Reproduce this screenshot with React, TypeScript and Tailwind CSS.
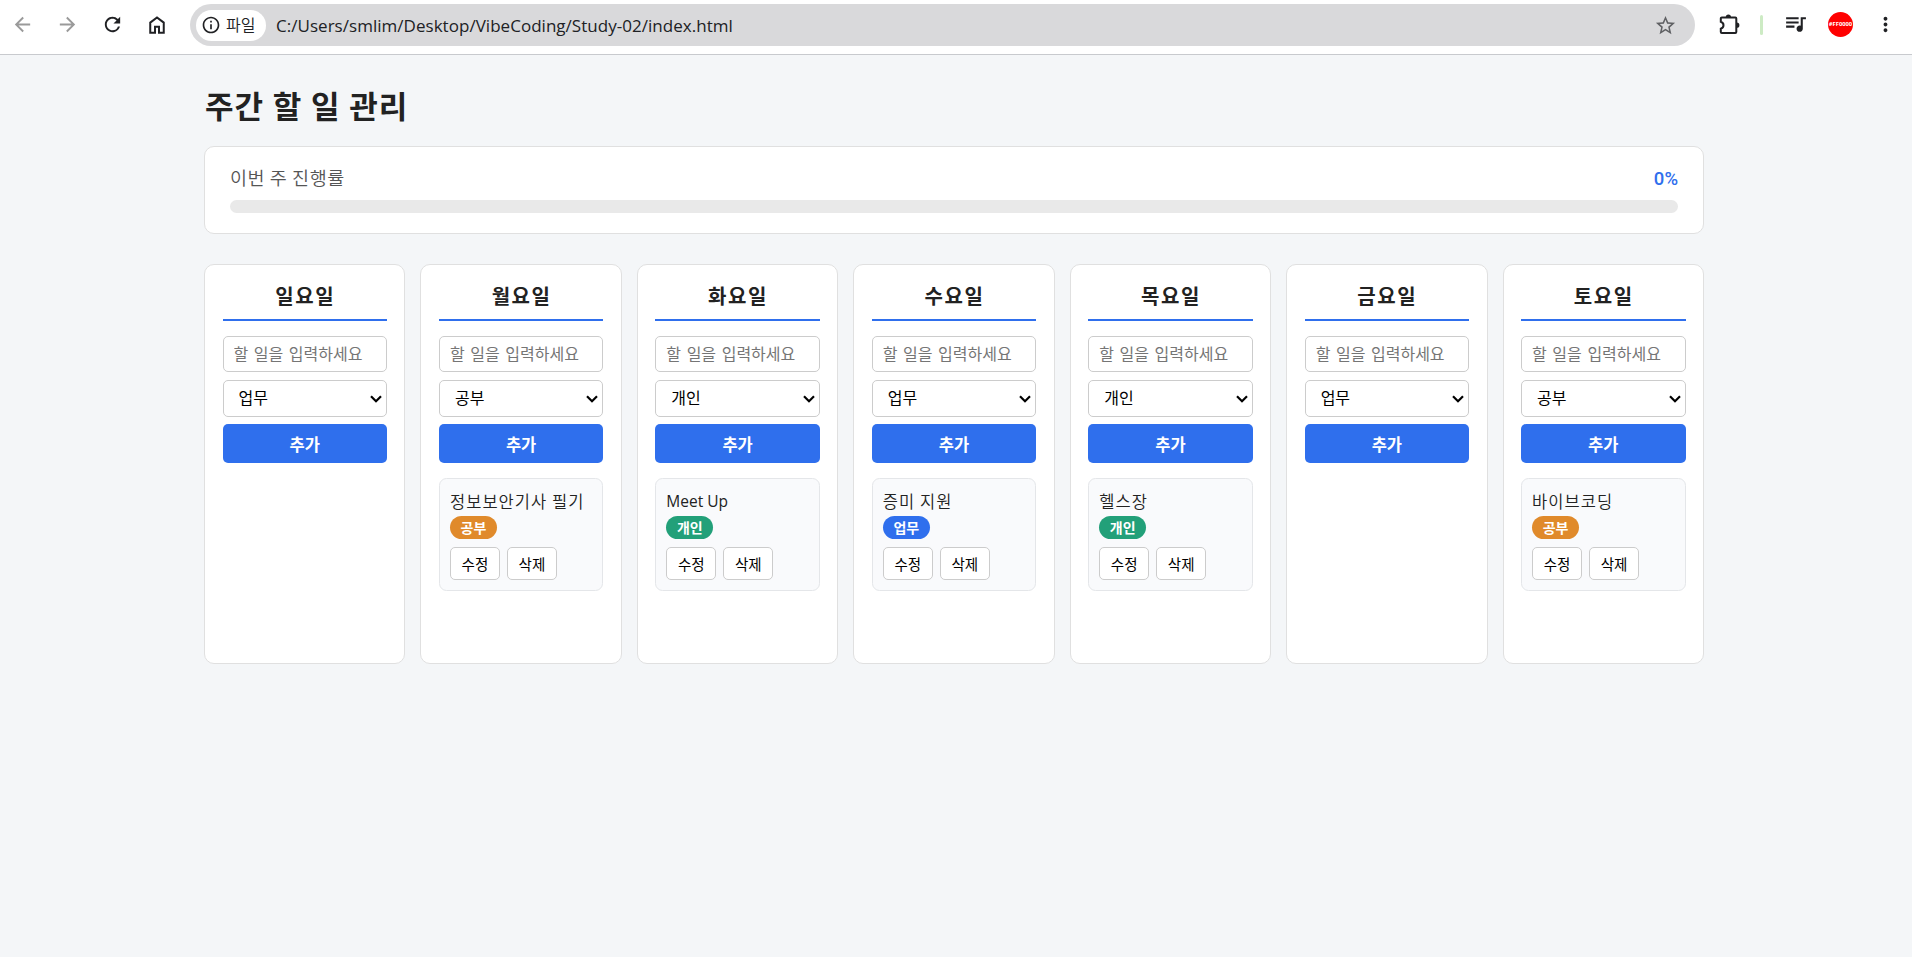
import {
  MdArrowBack,
  MdArrowForward,
  MdInfoOutline,
  MdMoreVert,
  MdQueueMusic,
  MdRefresh,
  MdStarBorder,
} from "react-icons/md";

type Category = "업무" | "공부" | "개인";

type Day = {
  name: string;
  selected: Category;
  task?: { title: string; category: Category };
};

const categories: Category[] = ["업무", "공부", "개인"];

const badgeColors: Record<Category, string> = {
  업무: "bg-[#2f6fed]",
  공부: "bg-[#e08a2b]",
  개인: "bg-[#22a079]",
};

const days: Day[] = [
  { name: "일요일", selected: "업무" },
  {
    name: "월요일",
    selected: "공부",
    task: { title: "정보보안기사 필기", category: "공부" },
  },
  {
    name: "화요일",
    selected: "개인",
    task: { title: "Meet Up", category: "개인" },
  },
  {
    name: "수요일",
    selected: "업무",
    task: { title: "증미 지원", category: "업무" },
  },
  {
    name: "목요일",
    selected: "개인",
    task: { title: "헬스장", category: "개인" },
  },
  { name: "금요일", selected: "업무" },
  {
    name: "토요일",
    selected: "공부",
    task: { title: "바이브코딩", category: "공부" },
  },
];

function HomeIcon() {
  return (
    <svg viewBox="0 0 16 18" className="h-[18px] w-4" fill="none">
      <path
        d="M1.25 6.6 8 1.5l6.75 5.1v10.1H10v-6H6v6H1.25z"
        stroke="#202124"
        strokeWidth="2"
      />
    </svg>
  );
}

function PuzzleIcon() {
  return (
    <svg viewBox="0 0 21 21" className="size-[21px]" fill="none">
      <path
        d="M2.8 3.4H16.3a1 1 0 0 1 1 1V18a1 1 0 0 1-1 1H2.8a1 1 0 0 1-1-1v-3.4c3.6-1.2 3.6-5.6 0-6.8V4.4a1 1 0 0 1 1-1z"
        stroke="#202124"
        strokeWidth="2"
      />
      <path d="M6.8 3a2.6 2.6 0 0 1 5.2 0zM17.8 8.6a2.6 2.6 0 0 1 0 5.2z" fill="#202124" />
    </svg>
  );
}

function BrowserBar() {
  return (
    <header className="flex h-[55px] items-start border-b border-[#c8cace] bg-white pt-1 text-[#202124]">
      <div className="flex h-[41px] w-[190px] items-center pl-[11px]">
        <MdArrowBack className="size-[23px] text-[#9a9a9a]" />
        <MdArrowForward className="ml-[22px] size-[23px] text-[#9a9a9a]" />
        <MdRefresh className="ml-[22px] size-[23px]" />
        <span className="ml-[25px]">
          <HomeIcon />
        </span>
      </div>
      <div className="flex h-[42px] w-[1505px] items-center rounded-full bg-[#d9d9db] pr-[18px] pl-1.5">
        <div className="flex h-[31px] w-[70px] items-center rounded-full bg-white pl-[5px]">
          <MdInfoOutline className="size-5" />
          <span className="ml-[5px] pb-[3px] text-[16px] font-[350]">파일</span>
        </div>
        <span className="ml-[10px] pt-0.5 font-['Open_Sans','Noto_Sans',sans-serif] text-[17px] tracking-[0.03px]">
          C:/Users/smlim/Desktop/VibeCoding/Study-02/index.html
        </span>
        <MdStarBorder className="ml-auto size-[23px] text-[#5f6063]" />
      </div>
      <div className="flex h-[41px] flex-1 items-center pl-6">
        <PuzzleIcon />
        <span className="ml-5 h-5 w-[3px] rounded-full bg-[#cdebc4]" />
        <MdQueueMusic className="mb-0.5 ml-[20px] size-[25px]" />
        <span className="ml-[20px] flex size-[25px] items-center justify-center overflow-hidden rounded-full bg-[#ff0000] font-['Open_Sans',sans-serif] text-[5.8px] font-bold text-white">
          #FF0000
        </span>
        <MdMoreVert className="ml-[21px] size-[23px]" />
      </div>
    </header>
  );
}

function TaskCard({ title, category }: { title: string; category: Category }) {
  // Hangul is set a little larger and looser than Latin text
  const titleFont = /^[\w ]+$/.test(title)
    ? "font-['Open_Sans',sans-serif] text-[15.5px] font-normal"
    : "text-[16.5px] tracking-[1.05px] font-[350]";

  return (
    <li className="h-[113px] rounded-[7.5px] border border-[#e4e6e9] bg-[#f9fafc] p-[10px]">
      <p className={`flex h-[25px] items-center whitespace-nowrap ${titleFont}`}>
        {title}
      </p>
      <span
        className={`mt-0.5 flex h-[23px] w-[47px] items-center justify-center rounded-full text-[14px] font-bold text-white ${badgeColors[category]}`}
      >
        {category}
      </span>
      <div className="mt-2 flex gap-[7px] text-black">
        <button className="h-[33px] w-[50px] rounded-[5px] border border-[#cccccc] bg-white text-[14.5px]">
          수정
        </button>
        <button className="h-[33px] w-[50px] rounded-[5px] border border-[#cccccc] bg-white text-[14.5px]">
          삭제
        </button>
      </div>
    </li>
  );
}

function DayColumn({ day }: { day: Day }) {
  return (
    <section className="h-[400px] min-w-0 rounded-[10px] border border-[#e0e0e0] bg-white px-[17.5px] pt-[17px]">
      <h2 className="h-[39px] border-b-2 border-[#2f6fed] pl-px text-center text-[20px] leading-7 font-bold tracking-[1.6px]">
        {day.name}
      </h2>
      <input
        type="text"
        placeholder="할 일을 입력하세요"
        className="mt-[15px] block h-9 w-full rounded-[5px] border border-[#cccccc] px-[10px] pb-0.5 text-[16px] [word-spacing:2px] placeholder:text-[#757575]"
      />
      <div className="relative mt-2">
        <select
          defaultValue={day.selected}
          className="block h-[37px] w-full appearance-none rounded-[5px] border border-[#cccccc] bg-white px-[15px] pb-[3px] text-[16px] text-black"
        >
          {categories.map((c) => (
            <option key={c}>{c}</option>
          ))}
        </select>
        <svg
          viewBox="0 0 12 8"
          className="pointer-events-none absolute top-[15px] right-[5px] h-2 w-3"
          fill="none"
        >
          <path d="M1 1.2 6 6.2 11 1.2" stroke="#000" strokeWidth="2.2" />
        </svg>
      </div>
      <button className="mt-[7px] block h-[39px] w-full rounded-[5px] bg-[#2f6fed] pt-0.5 text-[16.5px] font-bold text-white">
        추가
      </button>
      <ul className="mt-[15px]">
        {day.task && <TaskCard {...day.task} />}
      </ul>
    </section>
  );
}

export default function App() {
  const progress = 0;

  return (
    <div className="min-h-screen bg-[#f4f6f8] font-['Noto_Sans_CJK_KR',sans-serif] text-[#222222]">
      <BrowserBar />
      <main className="ml-[204px] w-[1500px] pt-[26px]">
        <h1 className="h-[65px] pl-px text-[31px] leading-[48px] font-bold tracking-[1px] [word-spacing:0.7px]">
          주간 할 일 관리
        </h1>
        <div className="h-[88px] rounded-[10px] border border-[#e0e0e0] bg-white px-[25px] pt-[18px]">
          <div className="flex h-[26px] items-center justify-between">
            <span className="text-[18.5px] font-[350] tracking-[0.55px] text-[#555555]">
              이번 주 진행률
            </span>
            <span className="pt-1 font-['Roboto',sans-serif] text-[18.5px] font-medium text-[#2f6fed]">
              {progress}%
            </span>
          </div>
          <div className="mt-[9px] h-[13px] overflow-hidden rounded-full bg-[#e9e9e9]">
            <div
              className="h-full bg-[#2f6fed]"
              style={{ width: `${progress}%` }}
            />
          </div>
        </div>
        <div className="mt-[30px] grid grid-cols-7 gap-[15px]">
          {days.map((day) => (
            <DayColumn key={day.name} day={day} />
          ))}
        </div>
      </main>
    </div>
  );
}
